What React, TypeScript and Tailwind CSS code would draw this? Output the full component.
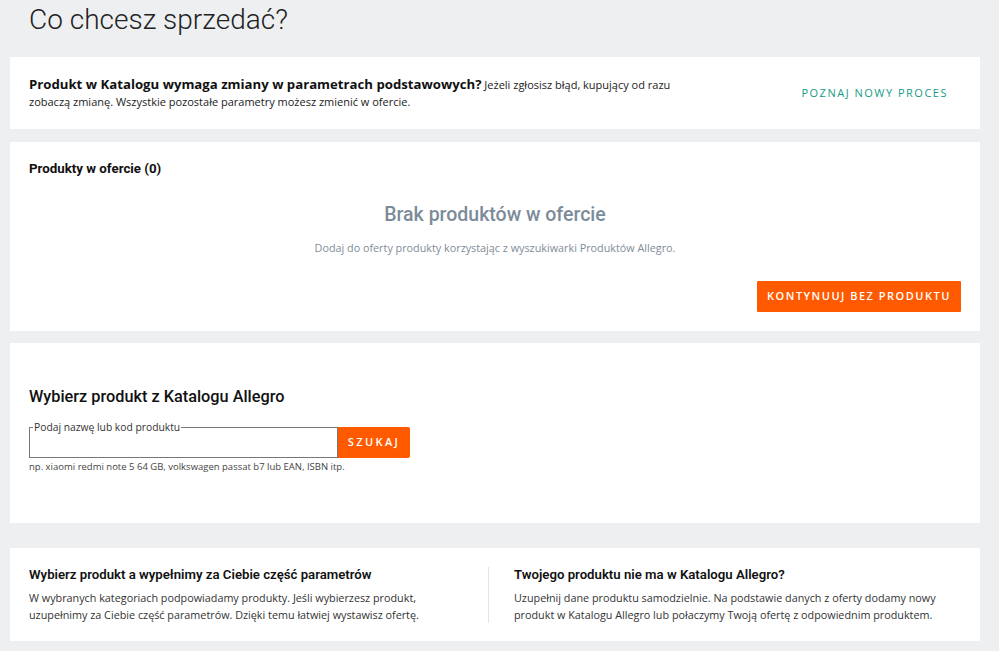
import React from "react";

const open = { fontFamily: '"Open Sans", "Liberation Sans", sans-serif' };
const roboto = { fontFamily: 'Roboto, "Liberation Sans", sans-serif' };

export default function App() {
  return (
    <div className="min-h-[651px] bg-[#eeeff1] pl-[10px] pr-[19px] pb-[10px] text-[#222]" style={open}>
      <h1
        className="pl-[19px] h-[57px] pt-[3px] text-[28px] leading-[34px] font-light text-[#222]"
        style={roboto}
      >
        Co chcesz sprzedać?
      </h1>

      {/* Card 1 */}
      <div className="bg-white flex items-center justify-between pl-[19px] pr-[32px] py-[19px]">
        <p className="w-[650px] text-[11px] leading-[17px] text-[#222]">
          <span className="text-[13.2px] leading-[17px] font-bold text-[#111]">
            Produkt w Katalogu wymaga zmiany w parametrach podstawowych?
          </span>{" "}
          Jeżeli zgłosisz błąd, kupujący od razu zobaczą zmianę. Wszystkie pozostałe parametry możesz zmienić w ofercie.
        </p>
        <a className="text-[11px] tracking-[1.5px] text-[#179a85] mt-[1px]">POZNAJ NOWY PROCES</a>
      </div>

      {/* Card 2 */}
      <div className="bg-white px-[19px] pt-[19px] pb-[19px] mt-[13px]">
        <h2 className="text-[13.3px] leading-[16px] font-bold text-[#111]" style={roboto}>
          Produkty w ofercie (0)
        </h2>
        <div className="text-center mt-[26px]">
          <div className="text-[19.5px] leading-[24px] font-medium text-[#7c8b99]" style={roboto}>
            Brak produktów w ofercie
          </div>
          <div className="mt-[13px] text-[10.8px] leading-[16px] text-[#7f8c98]">
            Dodaj do oferty produkty korzystając z wyszukiwarki Produktów Allegro.
          </div>
        </div>
        <div className="flex justify-end mt-[25px]">
          <button className="w-[204px] h-[31px] bg-[#ff5a00] text-white text-[11px] font-semibold tracking-[1.5px] rounded-[1px] whitespace-nowrap">
            KONTYNUUJ BEZ PRODUKTU
          </button>
        </div>
      </div>

      {/* Card 3 */}
      <div className="bg-white px-[19px] pt-[44px] pb-[49px] mt-[12px]">
        <h2 className="text-[16.3px] leading-[20px] font-medium text-[#111]" style={roboto}>
          Wybierz produkt z Katalogu Allegro
        </h2>
        <div className="flex items-end mt-[14px]">
          <fieldset className="w-[309px] border border-[#777] pl-0">
            <legend className="ml-[3px] px-[1px] text-[10.3px] leading-[12px] text-[#333]">
              Podaj nazwę lub kod produktu
            </legend>
            <div className="h-[24px]" />
          </fieldset>
          <button className="w-[72px] h-[31px] bg-[#ff5a00] text-white text-[11px] font-semibold tracking-[2.4px] rounded-r-[2px]">
            SZUKAJ
          </button>
        </div>
        <div className="mt-[2px] text-[9.5px] leading-[14px] text-[#444]">
          np. xiaomi redmi note 5 64 GB, volkswagen passat b7 lub EAN, ISBN itp.
        </div>
      </div>

      {/* Card 4 */}
      <div className="bg-white flex pt-[19px] pb-[18px] mt-[25px]">
        <div className="w-[478px] pl-[19px] pr-[20px]">
          <h3 className="text-[13.2px] leading-[16px] font-semibold text-[#111]" style={roboto}>
            Wybierz produkt a wypełnimy za Ciebie część parametrów
          </h3>
          <p className="mt-[6px] text-[10.8px] leading-[17px] text-[#333] w-[400px]">
            W wybranych kategoriach podpowiadamy produkty. Jeśli wybierzesz produkt, uzupełnimy za Ciebie część parametrów. Dzięki temu łatwiej wystawisz ofertę.
          </p>
        </div>
        <div className="flex-1 border-l border-[#e4e4e4] pl-[25px] pr-[19px]">
          <h3 className="text-[13.2px] leading-[16px] font-semibold text-[#111]" style={roboto}>
            Twojego produktu nie ma w Katalogu Allegro?
          </h3>
          <p className="mt-[6px] text-[10.8px] leading-[17px] text-[#333] w-[435px]">
            Uzupełnij dane produktu samodzielnie. Na podstawie danych z oferty dodamy nowy produkt w Katalogu Allegro lub połaczymy Twoją ofertę z odpowiednim produktem.
          </p>
        </div>
      </div>
    </div>
  );
}
